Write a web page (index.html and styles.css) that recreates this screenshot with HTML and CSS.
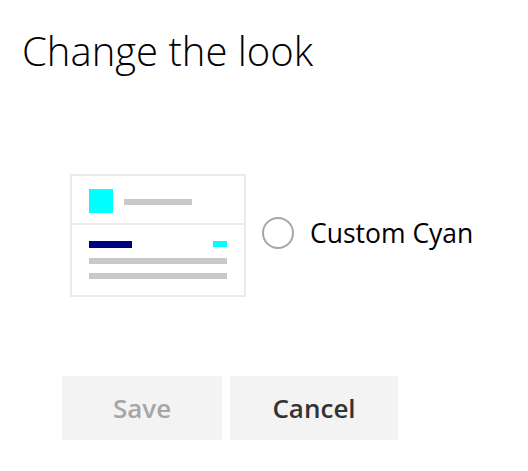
FILE: index.html
```html
<!DOCTYPE html>
<html>
<head>
<meta charset="utf-8">
<link rel="stylesheet" href="styles.css">
</head>
<body>
<div class="page">
  <h1 class="title">Change the look</h1>
  <div class="choice">
    <div class="preview">
      <div class="preview-top">
        <div class="swatch"></div>
        <div class="bar bar-title"></div>
      </div>
      <div class="preview-body">
        <div class="row">
          <div class="bar bar-navy"></div>
          <div class="bar bar-cyan"></div>
        </div>
        <div class="bar bar-line"></div>
        <div class="bar bar-line"></div>
      </div>
    </div>
    <label class="option">
      <span class="radio"></span>
      <span class="option-label">Custom Cyan</span>
    </label>
  </div>
  <div class="actions">
    <button class="btn btn-save" disabled>Save</button>
    <button class="btn btn-cancel">Cancel</button>
  </div>
</div>
</body>
</html>
```
FILE: styles.css
```css
html, body {
  margin: 0;
  padding: 0;
  background: #ffffff;
}
body {
  font-family: "Open Sans", "Noto Sans", sans-serif;
  color: #000;
}
.page {
  padding: 23px 0 0 22px;
}
.title {
  margin: 0;
  font-size: 40px;
  font-weight: 300;
  line-height: 56px;
  color: #000;
}
.choice {
  display: flex;
  align-items: center;
  margin: 95px 0 0 48px;
}
.preview {
  width: 172px;
  height: 119px;
  border: 2px solid #eaeaea;
  display: flex;
  flex-direction: column;
}
.preview-top {
  height: 47px;
  border-bottom: 2px solid #eaeaea;
  display: flex;
  align-items: center;
  padding: 0 17px;
  gap: 11px;
}
.swatch {
  width: 24px;
  height: 24px;
  background: #00ffff;
  margin-top: 2px;
}
.bar { height: 6px; background: #c8c8c8; }
.bar-title { width: 68px; margin-top: 4px; }
.preview-body {
  padding: 16px 17px 0 17px;
}
.row {
  display: flex;
  justify-content: space-between;
  align-items: flex-start;
  margin-bottom: 10px;
}
.bar-navy { width: 43px; height: 7px; background: #000080; }
.bar-cyan { width: 14px; height: 6px; background: #00ffff; }
.bar-line { width: 138px; margin-bottom: 9px; }
.option {
  display: flex;
  align-items: center;
  margin-left: 16px;
  margin-top: -6px;
}
.radio {
  width: 28px;
  height: 28px;
  border: 2px solid #a6a6a6;
  border-radius: 50%;
  box-sizing: content-box;
}
.option-label {
  margin-left: 16px;
  font-size: 26.5px;
  color: #000;
}
.actions {
  display: flex;
  gap: 8px;
  margin: 79px 0 0 40px;
}
.btn {
  height: 64px;
  border: none;
  background: #f3f3f3;
  font-family: "Open Sans", "Noto Sans", sans-serif;
  font-size: 26px;
  font-weight: 600;
  padding: 0;
}
.btn-save { width: 160px; color: #a6a6a6; }
.btn-cancel { width: 168px; color: #333333; }
```
